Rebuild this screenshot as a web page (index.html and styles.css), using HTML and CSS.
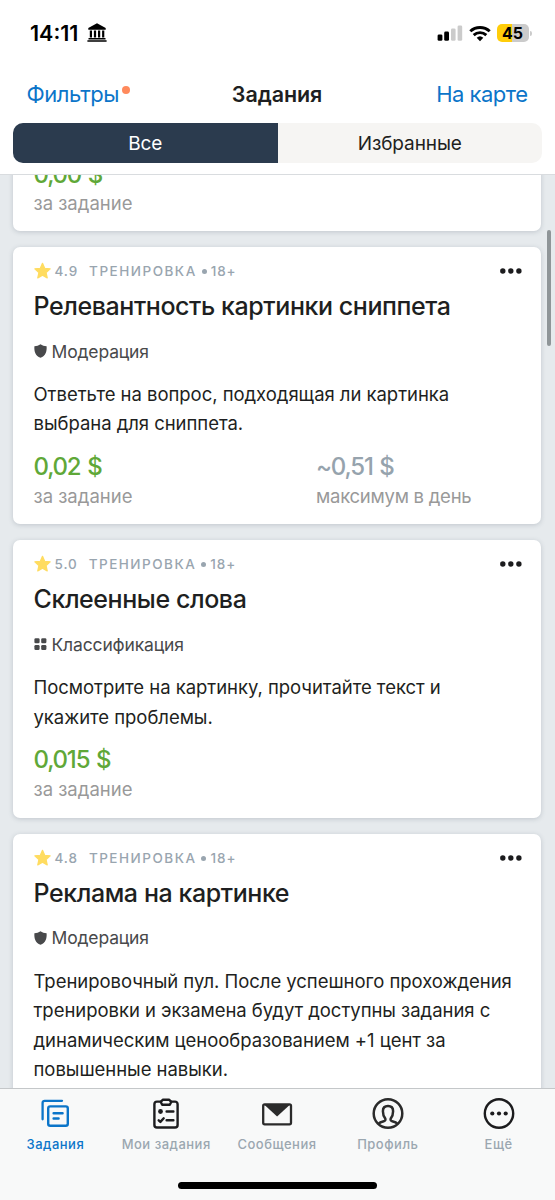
FILE: index.html
```html
<!DOCTYPE html>
<html lang="ru">
<head>
<meta charset="utf-8">
<title>Задания</title>
<link rel="stylesheet" href="styles.css">
</head>
<body>
<svg class="defs" width="0" height="0" aria-hidden="true">
  <symbol id="star" viewBox="0 0 18 18"><path d="M9 .9l2.300 5.200 5.800.6-4.300 3.900 1.200 5.700L9 13.400l-5 2.900 1.200-5.700L.9 6.700l5.800-.6z" fill="#ffdc60" stroke="#ffdc60" stroke-width="1.300" stroke-linejoin="round"/></symbol>
  <symbol id="shield" viewBox="0 0 13 14"><path d="M6.500.2C8.300 1.600 10.300 2 12.600 2.200c.4 5.300-1 9.500-6.100 11.600C1.400 11.700 0 7.500.4 2.200 2.700 2 4.700 1.600 6.500.2z" fill="#48494b"/></symbol>
  <symbol id="grid" viewBox="0 0 13 14"><g fill="#48494b"><rect x=".4" y="1.300" width="5.200" height="5" rx="1.300"/><rect x="7.200" y="1.300" width="5.200" height="5" rx="1.300"/><rect x=".4" y="8" width="5.200" height="5" rx="1.300"/><rect x="7.200" y="8" width="5.200" height="5" rx="1.300"/></g></symbol>
  <symbol id="dots" viewBox="0 0 22 6"><g fill="#1c1c1e"><circle cx="2.800" cy="3" r="2.700"/><circle cx="10.800" cy="3" r="2.700"/><circle cx="18.900" cy="3" r="2.700"/></g></symbol>
</svg>
<div class="screen">
  <header class="header">
    <div class="status">
      <span class="time">14:11</span>
      <svg class="bank" width="20" height="20" viewBox="0 0 20 20"><path d="M10 .3L18.700 5v1.800H1.300V5zM2.800 7.600h2.200v7H2.800zm4.100 0h2.200v7H6.900zm4.100 0h2.200v7H11zm4.100 0h2.200v7h-2.200zM1.500 15h17v1.400h-17zM.4 17.200h19.200v1.500H.4z" fill="#000"/></svg>
      <span class="spacer"></span>
      <svg class="signal" width="26" height="16" viewBox="0 0 26 16"><rect x=".6" y="9.400" width="4.800" height="6.400" rx="1.400" fill="#000"/><rect x="7.200" y="6.600" width="4.800" height="9.200" rx="1.400" fill="#000"/><rect x="14" y="3.400" width="4.600" height="12.400" rx="1.400" fill="#cbcbcb"/><rect x="20.600" y=".4" width="4.600" height="15.400" rx="1.400" fill="#cbcbcb"/></svg>
      <svg class="wifi" width="22" height="17" viewBox="0 0 22 17"><g fill="none" stroke="#000" stroke-width="2.900"><path d="M1.300 6.300a14.200 14.200 0 0 1 19.400 0"/><path d="M4.700 10.100a9.300 9.300 0 0 1 12.600 0"/></g><path d="M11 16.200l-3.300-3.400a4.900 4.900 0 0 1 6.600 0z" fill="#000"/></svg>
      <span class="battery">45</span><span class="battery-cap"></span>
    </div>
    <nav class="nav">
      <span class="link filters">Фильтры<i class="badge"></i></span>
      <h1 class="nav-title">Задания</h1>
      <span class="link map">На карте</span>
    </nav>
    <div class="segments"><span class="segment active">Все</span><span class="segment">Избранные</span></div>
  </header>

  <main class="feed">
    <article class="card card-first">
      <div class="prices"><div><div class="price">0,00 $</div><div class="caption">за задание</div></div></div>
    </article>
    <article class="card">
      <div class="meta"><svg class="star"><use href="#star"/></svg><span class="rating">4.9</span><span class="kind">ТРЕНИРОВКА</span><i class="bullet"></i><span class="age">18+</span><svg class="more"><use href="#dots"/></svg></div>
      <h2 class="title">Релевантность картинки сниппета</h2>
      <div class="category"><svg class="cat-icon"><use href="#shield"/></svg><span>Модерация</span></div>
      <p class="desc">Ответьте на вопрос, подходящая ли картинка<br>выбрана для сниппета.</p>
      <div class="prices">
        <div><div class="price">0,02 $</div><div class="caption">за задание</div></div>
        <div><div class="price muted">~0,51 $</div><div class="caption limit">максимум в день</div></div>
      </div>
    </article>
    <article class="card">
      <div class="meta"><svg class="star"><use href="#star"/></svg><span class="rating">5.0</span><span class="kind">ТРЕНИРОВКА</span><i class="bullet"></i><span class="age">18+</span><svg class="more"><use href="#dots"/></svg></div>
      <h2 class="title">Склеенные слова</h2>
      <div class="category"><svg class="cat-icon"><use href="#grid"/></svg><span>Классификация</span></div>
      <p class="desc">Посмотрите на картинку, прочитайте текст и<br>укажите проблемы.</p>
      <div class="prices"><div><div class="price">0,015 $</div><div class="caption">за задание</div></div></div>
    </article>
    <article class="card">
      <div class="meta"><svg class="star"><use href="#star"/></svg><span class="rating">4.8</span><span class="kind">ТРЕНИРОВКА</span><i class="bullet"></i><span class="age">18+</span><svg class="more"><use href="#dots"/></svg></div>
      <h2 class="title">Реклама на картинке</h2>
      <div class="category"><svg class="cat-icon"><use href="#shield"/></svg><span>Модерация</span></div>
      <p class="desc">Тренировочный пул. После успешного прохождения<br>тренировки и экзамена будут доступны задания с<br>динамическим ценообразованием +1 цент за<br>повышенные навыки.</p>
    </article>
    <div class="scrollbar"></div>
  </main>

  <footer class="footer">
    <nav class="tabs">
      <div class="tab current">
        <svg width="36" height="36" viewBox="0 0 36 36" fill="none" stroke="#0b75c9" stroke-width="2.400" stroke-linecap="round" stroke-linejoin="round"><path d="M5.600 23.300V6.800a2 2 0 0 1 2-2H25" stroke-width="2.300"/><rect x="11.200" y="10.400" width="19.600" height="19.400" rx="2"/><path d="M16.600 17.200h9M16.600 22.500h5"/></svg>
        <span>Задания</span>
      </div>
      <div class="tab">
        <svg width="36" height="36" viewBox="0 0 36 36" fill="none" stroke="#1c1c1e" stroke-width="2.400" stroke-linecap="round" stroke-linejoin="round"><path d="M12.800 5.600H9a2.600 2.600 0 0 0-2.600 2.600v20.700A2.600 2.600 0 0 0 9 31.500h18a2.600 2.600 0 0 0 2.600-2.600V8.200A2.600 2.600 0 0 0 27 5.600h-3.800"/><path d="M14.800 3.700h6.400l2 2.200-1.400 2.900h-7.600l-1.400-2.900z"/><path d="M18.600 15.500h6.800M18.600 24.300h6.800M10.700 24.300l1.700 1.600 3.300-3.600"/><circle cx="12.500" cy="15.500" r="2.400" fill="#1c1c1e" stroke="none"/></svg>
        <span>Мои задания</span>
      </div>
      <div class="tab">
        <svg width="36" height="36" viewBox="0 0 36 36"><rect x="4.200" y="8.300" width="27.800" height="20" rx="1.500" fill="none" stroke="#2b2b2b" stroke-width="2.300"/><path d="M4.500 8h27.200L18.100 20.500z" fill="#2b2b2b"/></svg>
        <span>Сообщения</span>
      </div>
      <div class="tab">
        <svg width="36" height="36" viewBox="0 0 36 36" fill="none" stroke="#2b2b2b" stroke-width="2.500" stroke-linejoin="round"><circle cx="18" cy="17.500" r="14.300"/><path d="M8.300 28c1.100-1.500 3-2.300 5.500-2.800 1.500-.3 1.900-1.300 1.500-2.600-1.700-2-2.400-4.900-2.400-7.400 0-3.400 1.700-5.100 5.100-5.100s5.100 1.700 5.100 5.100c0 2.500-.7 5.400-2.400 7.400-.4 1.300 0 2.300 1.500 2.600 2.500.5 4.400 1.300 5.500 2.800"/></svg>
        <span>Профиль</span>
      </div>
      <div class="tab">
        <svg width="36" height="36" viewBox="0 0 36 36"><circle cx="18" cy="17.500" r="14.200" fill="none" stroke="#1c1c1e" stroke-width="2.400"/><g fill="#1c1c1e"><circle cx="11.300" cy="17.500" r="2.100"/><circle cx="18" cy="17.500" r="2.100"/><circle cx="24.700" cy="17.500" r="2.100"/></g></svg>
        <span>Ещё</span>
      </div>
    </nav>
    <div class="home"></div>
  </footer>
</div>
</body>
</html>
```

FILE: styles.css
```css
* { box-sizing: border-box; }
body { margin: 0; font-family: Inter, "Liberation Sans", sans-serif; color: #1e1f21; background: #fff; }
h1, h2, p { margin: 0; }
svg { display: block; flex: none; }
.defs { position: absolute; }
.screen { width: 555px; height: 1200px; display: flex; flex-direction: column; overflow: hidden; }

.header { height: 175px; flex: none; background: #fff; border-bottom: 1px solid #d9dcdf; }
.status { height: 66px; display: flex; align-items: center; padding: 0 23.500px 0 30px; }
.time { font-size: 21.500px; font-weight: 600; color: #000; letter-spacing: 0; }
.bank { margin-left: 9px; }
.spacer { flex: 1; }
.wifi { margin: 0 6px 0 6px; }
.battery { width: 32px; height: 18px; border-radius: 5px; background: linear-gradient(90deg, #ffcd0a 47%, #cbcbcb 47%); font-size: 16px; line-height: 18px; font-weight: 700; color: #000; text-align: center; }
.battery-cap { width: 2px; height: 5px; margin-left: 1px; border-radius: 0 2px 2px 0; background: #cbcbcb; }
.nav { height: 57px; display: grid; grid-template-columns: 1fr auto 1fr; align-items: center; padding: 0 27.500px 2px 26.500px; }
.link { color: #0b75c9; font-size: 22px; letter-spacing: -0.500px; white-space: nowrap; }
.filters { display: flex; align-items: center; }
.badge { width: 8px; height: 8px; margin: 0 0 8px 3px; border-radius: 50%; background: #ff8a5c; }
.nav-title { font-size: 21.500px; font-weight: 600; letter-spacing: -0.100px; }
.map { text-align: right; }
.segments { height: 40px; margin: 0 13px; display: flex; border-radius: 10px; overflow: hidden; background: #f6f5f3; }
.segment { flex: 1; text-align: center; font-size: 19px; line-height: 41px; letter-spacing: -0.100px; }
.active { background: #2b3b4e; color: #fff; }

.feed { flex: 1; min-height: 0; position: relative; overflow: hidden; padding: 0 14px 0 13px; background: #e6eaed; display: flex; flex-direction: column; gap: 16px; }
.card { flex: none; height: 277.400px; padding: 12px 19px 0 20.500px; border-radius: 7px; background: #fff; box-shadow: 0 1px 5px rgba(60, 75, 90, 0.220); }
.card-first { height: 72px; margin-top: -16px; padding-top: 0; }
.card-first .prices { margin-top: 0; }
.card-first .price { line-height: 32px; }
.meta { height: 24px; display: flex; align-items: center; color: #99a5af; font-size: 13.500px; font-weight: 500; letter-spacing: 0.900px; }
.star { width: 17px; height: 18px; margin-right: 4px; }
.kind { margin-left: 11px; letter-spacing: 1.500px; }
.bullet { width: 5px; height: 5px; margin: 1px 4px 0 5px; border-radius: 50%; background: #99a5af; }
.more { width: 22px; height: 6px; margin-left: auto; }
.title { height: 46px; line-height: 46px; font-size: 25px; font-weight: 500; letter-spacing: -0.420px; white-space: nowrap; }
.category { height: 24px; margin-top: 10px; display: flex; align-items: center; gap: 5px; color: #48494b; font-size: 17.500px; letter-spacing: -0.150px; }
.cat-icon { width: 13px; height: 14px; }
.desc { margin-top: 17px; font-size: 18.500px; line-height: 29.400px; letter-spacing: -0.040px; white-space: nowrap; }
.prices { margin-top: 13px; display: grid; grid-template-columns: 282.500px 1fr; }
.price { height: 30px; line-height: 30px; font-size: 24px; font-weight: 500; letter-spacing: -1.200px; word-spacing: 1.500px; color: #5fa838; }
.muted { color: #96a3ad; }
.caption { height: 28px; line-height: 28px; font-size: 18.500px; color: #999; white-space: nowrap; }
.limit { letter-spacing: -0.250px; }
.scrollbar { position: absolute; right: 4px; top: 55px; width: 4px; height: 116px; border-radius: 2px; background: #8f9598; }

.footer { height: 112px; flex: none; background: #f8f9f9; border-top: 1px solid #c4c7c9; display: flex; flex-direction: column; align-items: center; }
.tabs { width: 555px; height: 93px; padding-right: 1px; display: grid; grid-template-columns: repeat(5, 1fr); }
.tab { display: flex; flex-direction: column; align-items: center; padding-top: 7px; color: #9ba7b0; font-size: 13px; font-weight: 500; letter-spacing: 0.500px; white-space: nowrap; }
.tab span { line-height: 24px; }
.current { color: #0b75c9; }
.home { width: 199px; height: 7px; border-radius: 4px; background: #000; }
```
